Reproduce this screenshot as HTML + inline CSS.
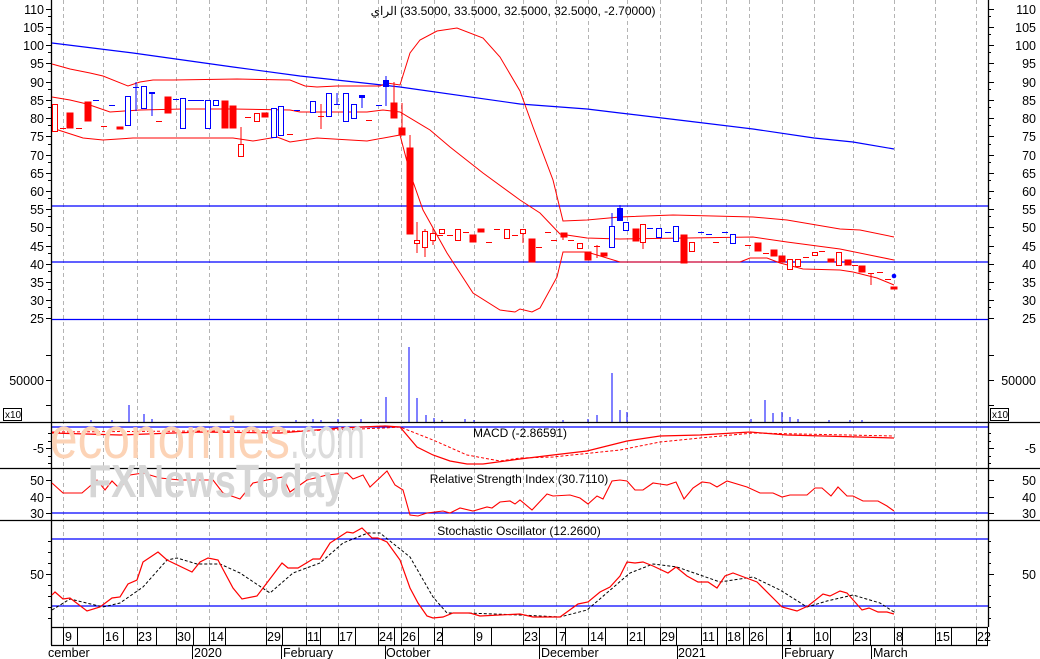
<!DOCTYPE html>
<html><head><meta charset="utf-8"><style>
html,body{margin:0;padding:0;background:#fff;}
svg{display:block;font-family:"Liberation Sans","Noto Sans CJK SC",sans-serif;}
</style></head><body>
<svg width="1040" height="659" viewBox="0 0 1040 659" xmlns="http://www.w3.org/2000/svg">
<rect width="1040" height="659" fill="#fff"/>
<g stroke="#b4b4b4" stroke-width="1" stroke-dasharray="4,3">
<path d="M63.5 0V627M103.5 0V627M137.5 0V627M176.5 0V627M209.5 0V627M266.5 0V627M306.5 0V627M338.5 0V627M378.5 0V627M401.5 0V627M434.5 0V627M474.5 0V627M523.5 0V627M556.5 0V627M588.5 0V627M627.5 0V627M660.5 0V627M701.5 0V627M726.5 0V627M749.5 0V627M782.5 0V627M814.5 0V627M853.5 0V627M894.5 0V627M935.5 0V627M976.5 0V627"/>
</g>
<g stroke="#0000ff" stroke-width="1.3">
<path d="M51 206H988M51 262H988M51 319.5H988M51 427H988M51 513H988M51 539H988M51 606H988"/>
</g>
<g stroke="#000" stroke-width="1.3">
<path d="M0 422.5H1040M0 468.5H1040M0 520.5H1040M51 627.5H988M51 645.5H988"/>
<path d="M51.5 0V645M988.5 0V627"/>
</g>
<g stroke="#000" stroke-width="1">
<path d="M46 9.5H51M46 27.5H51M46 45.5H51M46 63.5H51M46 82.5H51M46 100.5H51M46 118.5H51M46 136.5H51M46 155.5H51M46 173.5H51M46 191.5H51M46 209.5H51M46 227.5H51M46 246.5H51M46 264.5H51M46 282.5H51M46 300.5H51M46 318.5H51"/>
<path d="M988 9.5H994M988 27.5H994M988 45.5H994M988 63.5H994M988 82.5H994M988 100.5H994M988 118.5H994M988 136.5H994M988 155.5H994M988 173.5H994M988 191.5H994M988 209.5H994M988 227.5H994M988 246.5H994M988 264.5H994M988 282.5H994M988 300.5H994M988 318.5H994"/>
<path d="M48 16.5H51M48 34.5H51M48 52.5H51M48 71.5H51M48 89.5H51M48 107.5H51M48 125.5H51M48 144.5H51M48 162.5H51M48 180.5H51M48 198.5H51M48 216.5H51M48 235.5H51M48 253.5H51M48 271.5H51M48 289.5H51M48 307.5H51"/>
<path d="M988 16.5H991M988 34.5H991M988 52.5H991M988 71.5H991M988 89.5H991M988 107.5H991M988 125.5H991M988 144.5H991M988 162.5H991M988 180.5H991M988 198.5H991M988 216.5H991M988 235.5H991M988 253.5H991M988 271.5H991M988 289.5H991M988 307.5H991"/>
<path d="M46 380.5H51M988 380.5H994M46 405.5H51M988 405.5H994M46 355.5H51M988 355.5H994"/>
<path d="M46 448.5H51M988 448.5H994M48 433.5H51M988 433.5H991M48 441.5H51M988 441.5H991M48 456.5H51M988 456.5H991M48 463.5H51M988 463.5H991"/>
<path d="M46 480.5H51M988 480.5H994M46 497.5H51M988 497.5H994M46 513.5H51M988 513.5H994"/>
<path d="M46 574.5H51M988 574.5H994M48 541.5H51M988 541.5H991M48 552.5H51M988 552.5H991M48 563.5H51M988 563.5H991M48 585.5H51M988 585.5H991M48 596.5H51M988 596.5H991M48 607.5H51M988 607.5H991M48 618.5H51M988 618.5H991"/>
</g>
<g font-size="12.5" fill="#000">
<g text-anchor="end">
<text x="44" y="14">110</text><text x="44" y="50">100</text><text x="44" y="32">105</text><text x="44" y="68">95</text><text x="44" y="87">90</text><text x="44" y="105">85</text><text x="44" y="123">80</text><text x="44" y="141">75</text><text x="44" y="160">70</text><text x="44" y="178">65</text><text x="44" y="196">60</text><text x="44" y="214">55</text><text x="44" y="232">50</text><text x="44" y="251">45</text><text x="44" y="269">40</text><text x="44" y="287">35</text><text x="44" y="305">30</text><text x="44" y="323">25</text>
<text x="1036" y="14">110</text><text x="1036" y="32">105</text><text x="1036" y="50">100</text><text x="1036" y="68">95</text><text x="1036" y="87">90</text><text x="1036" y="105">85</text><text x="1036" y="123">80</text><text x="1036" y="141">75</text><text x="1036" y="160">70</text><text x="1036" y="178">65</text><text x="1036" y="196">60</text><text x="1036" y="214">55</text><text x="1036" y="232">50</text><text x="1036" y="251">45</text><text x="1036" y="269">40</text><text x="1036" y="287">35</text><text x="1036" y="305">30</text><text x="1036" y="323">25</text>
<text x="44" y="385">50000</text><text x="1036" y="385">50000</text>
<text x="44" y="453">-5</text><text x="1036" y="453">-5</text>
<text x="44" y="485">50</text><text x="44" y="502">40</text><text x="44" y="518">30</text>
<text x="1036" y="485">50</text><text x="1036" y="502">40</text><text x="1036" y="518">30</text>
<text x="44" y="579">50</text><text x="1036" y="579">50</text>
</g>
</g>
<rect x="3.5" y="408.5" width="18" height="12" fill="#fff" stroke="#000"/>
<text x="5" y="418" font-size="10">x10</text>
<rect x="990.5" y="408.5" width="18" height="12" fill="#fff" stroke="#000"/>
<text x="992" y="418" font-size="10">x10</text>

<text x="397" y="15" font-size="12" text-anchor="end">الراي</text>
<text x="400" y="15" font-size="12">(33.5000, 33.5000, 32.5000, 32.5000, -2.70000)</text>

<polyline fill="none" stroke="#0000ff" stroke-width="1.2" points="52,43 133,53 233,67 300,76 400,87 520,104 587,109 620,113 687,121 753,129 814,138 853,142 894,149"/>
<g fill="none" stroke="#ff0000" stroke-width="1">
<polyline points="52,64 70,69 90,73 103,76 128,86 140,82 153,80 173,80 237,79 290,80 305,86 317,87 337,86 380,86 387,83 400,85 410,53 420,40 437,31 457,28 483,38 500,57 520,91 533,127 553,180 563,221 587,220 620,217 673,215 753,217 787,220 840,229 860,230 894,237"/>
<polyline points="52,97 70,100 87,104 110,112 140,110 183,109 233,109 290,110 300,112 367,112 383,110 400,112 430,130 450,147 483,173 520,200 540,213 560,234 587,238 620,239 687,238 753,237 787,242 840,249 894,260"/>
<polyline points="52,128 83,138 103,140 133,138 233,138 253,141 277,137 290,142 317,138 367,141 400,135 410,173 423,210 447,253 473,293 500,310 515,312 520,309 532,312 540,308 557,277 563,252 587,252 620,262 740,262 750,258 767,258 780,263 803,269 840,270 853,272 877,278 894,285"/>
</g>

<g fill="#ff0000" stroke="#ff0000" stroke-width="1">
<path d="M70 113V128M88 102V121M120 127V129M168 97V113M225 101V128M233 106V128M265 113V117M394 82V118M402 103V135M410 135V234M473 235V242M481 229V232M532 239V262M563 233V240M588 252V260M604 253V256M635 229V241M683 235V263M757 243V251M774 250V256M782 256V262M830 259V262M847 260V265M862 266V272M871 273V285"/>
<rect x="67" y="113" width="6" height="15"/><rect x="85" y="102" width="6" height="19"/><rect x="117" y="127" width="6" height="2"/><rect x="165" y="97" width="6" height="16"/><rect x="222" y="101" width="6" height="27"/><rect x="230" y="106" width="6" height="22"/><rect x="262" y="113" width="6" height="4"/><rect x="391" y="103" width="6" height="15"/><rect x="399" y="128" width="6" height="7"/><rect x="407" y="148" width="6" height="86"/><rect x="470" y="235" width="6" height="7"/><rect x="478" y="229" width="6" height="3"/><rect x="529" y="239" width="6" height="23"/><rect x="561" y="233" width="6" height="4"/><rect x="585" y="252" width="6" height="8"/><rect x="601" y="253" width="6" height="3"/><rect x="633" y="229" width="6" height="12"/><rect x="681" y="235" width="6" height="28"/><rect x="755" y="243" width="6" height="8"/><rect x="771" y="250" width="6" height="6"/><rect x="779" y="256" width="6" height="6"/><rect x="828" y="259" width="6" height="3"/><rect x="845" y="260" width="6" height="5"/><rect x="859" y="266" width="6" height="6"/><rect x="891" y="287" width="6" height="2"/>
</g>
<g fill="#fff" stroke="#ff0000" stroke-width="1">
<path d="M241 127V156M321 104V129M417 222V253M425 229V257M433 228V245M523 243V233M597 245V258M643 242V249"/>
<rect x="52.5" y="104.5" width="5" height="27"/><rect x="238.5" y="144.5" width="5" height="12"/><rect x="254.5" y="113.5" width="5" height="8"/><rect x="414.5" y="240.5" width="5" height="3"/><rect x="422.5" y="231.5" width="5" height="16"/><rect x="430.5" y="233.5" width="5" height="7"/><rect x="439.5" y="229.5" width="5" height="4"/><rect x="455.5" y="229.5" width="5" height="11"/><rect x="504.5" y="229.5" width="5" height="9"/><rect x="520.5" y="229.5" width="5" height="4"/><rect x="577.5" y="243.5" width="5" height="5"/><rect x="640.5" y="224.5" width="5" height="18"/><rect x="689.5" y="242.5" width="5" height="9"/><rect x="787.5" y="259.5" width="5" height="10"/><rect x="795.5" y="259.5" width="5" height="7"/><rect x="812.5" y="252.5" width="5" height="3"/><rect x="836.5" y="252.5" width="5" height="13"/>
<path d="M60 128.5H66M76 128.5H82M101 126.5H107M156 121.5H162M245 117.5H251M287 134.5H293M318 116.5H324M366 120.5H372M437 235.5H443M447 235.5H453M463 232.5H469M486 242.5H492M494 229.5H500M512 235.5H518M536 247.5H542M545 232.5H551M551 240.5H557M568 240.5H574M594 246.5H600M713 242.5H719M745 245.5H751M763 253.5H769M803 257.5H809M819 251.5H825M852 265.5H858M868 273.5H874M877 272.5H883M885 279.5H891"/>
</g>
<g fill="#fff" stroke="#0000ff" stroke-width="1">
<path d="M136 82V111M152 92V116M337 93V104M362 95V108M386 76V106M612 213V247M620 205V221"/>
<rect x="125.5" y="96.5" width="5" height="29"/><rect x="141.5" y="86.5" width="5" height="22"/><rect x="180.5" y="98.5" width="5" height="30"/><rect x="205.5" y="100.5" width="5" height="28"/><rect x="213.5" y="100.5" width="5" height="5"/><rect x="271.5" y="108.5" width="5" height="29"/><rect x="278.5" y="106.5" width="5" height="29"/><rect x="310.5" y="101.5" width="5" height="11"/><rect x="326.5" y="93.5" width="5" height="23"/><rect x="343.5" y="93.5" width="5" height="28"/><rect x="351.5" y="104.5" width="5" height="14"/><rect x="609.5" y="226.5" width="5" height="21"/><rect x="623.5" y="222.5" width="5" height="8"/><rect x="656.5" y="228.5" width="5" height="9"/><rect x="673.5" y="226.5" width="5" height="15"/><rect x="730.5" y="234.5" width="5" height="9"/>
<path d="M93 100.5H99M109 105.5H115M133 87.5H139M173 99.5H179M188 100.5H204M294 110.5H300M334 104.5H340M376 105.5H382M647 228.5H653M665 232.5H671M698 232.5H704M706 234.5H712M722 232.5H728"/>
</g>
<g fill="#0000ff"><rect x="149" y="92" width="6" height="2"/><rect x="359" y="95" width="6" height="3"/><rect x="383" y="80" width="6" height="7"/><rect x="617" y="208" width="6" height="13"/><circle cx="894" cy="276" r="2.3"/></g>

<g stroke="#0000ff" stroke-width="1">
<path d="M129 422V405M144 422V414M386 422V397M409 422V347M417 422V398M426 422V415M612 422V373M620 422V410M627 422V412M765 422V400M773 422V413M782 422V412M597 422V415M588 422V419M91 422V420M112 422V420M152 422V419M233 422V417M296 422V420M313 422V419M321 422V420M338 422V419M361 422V419M434 422V418M442 422V420M465 422V419M474 422V420M563 422V420M751 422V419M790 422V417M798 422V419M829 422V420M850 422V420M862 422V420"/>
</g>

<polyline fill="none" stroke="#ff0000" stroke-width="1.2" points="52,433 120,435 200,432 280,433 340,428 385,426 400,427 417,447 433,455 450,461 467,464 483,464 520,459 553,455 587,451 627,441 660,436 700,435 750,432 787,435 894,438"/>
<polyline fill="none" stroke="#ff0000" stroke-width="1" stroke-dasharray="3,2" points="52,432 200,431 300,431 385,428 400,427 433,440 467,455 500,461 520,458 553,457 620,450 660,442 700,438 753,433 894,436"/>
<polyline fill="none" stroke="#ff0000" stroke-width="1.1" points="52,483 63,493 82,493 97,480 105,490 112,481 120,489 130,475 143,473 160,478 180,480 200,480 213,480 223,493 240,499 253,483 267,480 283,477 290,492 307,480 327,475 347,473 353,479 363,475 370,487 387,471 395,485 403,490 410,515 418,516 427,513 443,511 450,513 460,508 473,511 487,507 492,508 500,502 510,501 515,504 520,500 532,510 547,494 553,496 570,495 580,498 588,504 597,496 603,499 612,481 620,480 627,481 635,490 643,490 653,483 660,484 667,485 676,482 684,499 693,488 702,482 710,483 717,487 727,481 747,487 760,493 773,493 782,497 790,495 807,495 815,488 822,488 831,496 838,487 847,496 853,496 863,501 878,501 887,506 894,511"/>

<!-- watermark over lines -->
<text x="50" y="458" font-size="58" fill="#fcd3b6" textLength="240" lengthAdjust="spacingAndGlyphs">economies</text>
<text x="290" y="458" font-size="58" fill="#dcdcdc" textLength="75" lengthAdjust="spacingAndGlyphs">.com</text>
<text x="88" y="497" font-size="46" font-weight="bold" fill="#d6d6d6" textLength="257" lengthAdjust="spacingAndGlyphs">FXNewsToday</text>

<text x="520" y="437" font-size="12" text-anchor="middle">MACD (-2.86591)</text>
<text x="519" y="483" font-size="12" text-anchor="middle">Relative Strength Index (30.7110)</text>
<text x="519" y="535" font-size="12" text-anchor="middle">Stochastic Oscillator (12.2600)</text>

<polyline fill="none" stroke="#000" stroke-width="1" stroke-dasharray="3,2" points="52,610 70,599 103,607 120,603 143,587 167,560 177,558 197,564 220,564 240,573 270,593 293,573 320,563 343,543 368,533 380,533 410,557 433,597 447,613 467,613 520,615 560,617 587,610 630,573 653,564 677,567 720,582 753,577 780,590 807,607 827,601 853,595 880,603 894,612"/>
<polyline fill="none" stroke="#ff0000" stroke-width="1.2" points="52,595 55,592 63,599 70,598 87,611 100,607 112,598 120,597 128,584 137,580 143,562 158,552 167,560 192,572 200,562 208,558 218,560 233,588 242,599 257,596 282,563 288,568 298,568 313,559 320,559 330,543 347,532 353,533 362,528 372,538 378,538 387,542 400,560 410,588 418,603 427,616 433,618 443,617 453,613 470,613 480,616 520,614 533,617 560,617 578,604 588,602 600,592 610,587 620,576 627,562 635,563 643,562 653,566 668,573 676,567 687,576 698,582 708,582 717,588 725,576 733,573 757,582 782,607 797,611 808,606 823,594 830,596 840,591 847,593 862,610 869,608 878,612 887,612 894,614"/>

<g stroke="#000" stroke-width="1">
<path d="M63.5 627V645M77.5 627V645M103.5 627V645M123.5 627V645M137.5 627V645M156.5 627V645M176.5 627V645M193.5 627V645M209.5 627V645M225.5 627V645M266.5 627V645M282.5 627V645M306.5 627V645M320.5 627V645M338.5 627V645M355.5 627V645M378.5 627V645M394.5 627V645M401.5 627V645M418.5 627V645M434.5 627V645M442.5 627V645M474.5 627V645M491.5 627V645M523.5 627V645M539.5 627V645M556.5 627V645M565.5 627V645M588.5 627V645M605.5 627V645M627.5 627V645M644.5 627V645M660.5 627V645M676.5 627V645M701.5 627V645M717.5 627V645M726.5 627V645M743.5 627V645M749.5 627V645M766.5 627V645M782.5 627V645M790.5 627V645M814.5 627V645M830.5 627V645M853.5 627V645M870.5 627V645M894.5 627V645M902.5 627V645M935.5 627V645M951.5 627V645M976.5 627V645M987.5 627V645"/>
<path d="M192.5 645V659M281.5 645V659M385.5 645V659M539.5 645V659M677.5 645V659M782.5 645V659M871.5 645V659"/>
</g>
<g font-size="12.5" fill="#000">
<text x="65" y="641">9</text><text x="105" y="641">16</text><text x="138" y="641">23</text><text x="177" y="641">30</text><text x="210" y="641">14</text><text x="267" y="641">29</text><text x="307" y="641">11</text><text x="339" y="641">17</text><text x="379" y="641">24</text><text x="402" y="641">26</text><text x="436" y="641">2</text><text x="476" y="641">9</text><text x="524" y="641">23</text><text x="559" y="641">7</text><text x="590" y="641">14</text><text x="629" y="641">21</text><text x="661" y="641">29</text><text x="702" y="641">11</text><text x="727" y="641">18</text><text x="750" y="641">26</text><text x="786" y="641">1</text><text x="815" y="641">10</text><text x="854" y="641">23</text><text x="896" y="641">8</text><text x="936" y="641">15</text><text x="977" y="641">22</text>
<text x="48" y="657">cember</text><text x="194" y="657">2020</text><text x="283" y="657">February</text><text x="386" y="657">October</text><text x="541" y="657">December</text><text x="678" y="657">2021</text><text x="784" y="657">February</text><text x="873" y="657">March</text>
</g>
</svg>
</body></html>
